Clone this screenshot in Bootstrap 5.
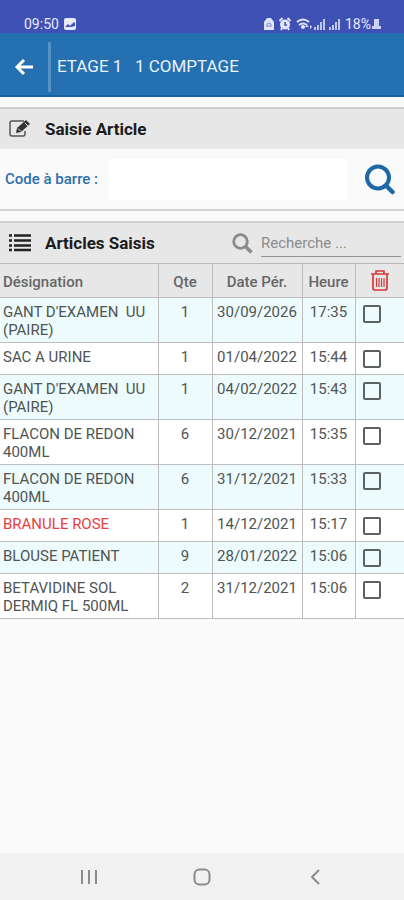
<!DOCTYPE html>
<html lang="fr">
<head>
<meta charset="utf-8">
<meta name="viewport" content="width=device-width, initial-scale=1">
<title>Comptage</title>
<link rel="stylesheet" href="https://cdn.jsdelivr.net/npm/bootstrap@5.3.0/dist/css/bootstrap.min.css">
<style>
  body { font-family: Roboto, "Liberation Sans", sans-serif; background: #fafafa; color: #505454; }
  svg { display: block; flex: none; }
  .status-bar { background: #3f51b5; color: #e6eafb; height: 33px; font-size: 14px; line-height: 18px; padding: 0 22px 0 24px; }
  .app-bar { background: #2570b0; border-bottom: 2px solid #1462a2; height: 64px; padding-top: 5px; color: #e9f3fb; }
  .back-btn { width: 48px; height: 50px; }
  .app-title { border-left: 3px solid #5592c5; height: 50px; padding-left: 6px; font-size: 17px; white-space: pre; }
  .panel-box { border-top: 2px solid #cfcfcf; margin-top: 10px; }
  .panel-head { background: #e7e7e7; height: 40px; padding-left: 8px; padding-right: 3px; }
  .panel-head h2 { font-size: 17px; font-weight: 700; color: #1c1c1c; padding-left: 13px; }
  .scan-form { height: 62px; padding: 0 8px 0 5px; border-bottom: 2px solid #d2d2d2; }
  .scan-form label { color: #2b6fac; font-size: 15px; font-weight: 500; width: 104px; }
  .scan-input { height: 41px; margin-right: 17px; }
  .search-input { width: 140px; height: 28px; line-height: 24px; border-bottom: 1px solid #929292; font-size: 15px; color: #777; }
  .search-input::placeholder { color: #8c8c8c; opacity: 1; }
  .items-table { table-layout: fixed; font-size: 15px; line-height: 18px; color: #505454; border-top: 1px solid #b9b9b9; }
  .items-table > :not(caption) > * > * { padding: 5px 3px 3px; border-right: 1px solid #bdbdbd; border-bottom: 1px solid #bdbdbd; color: inherit; background: transparent; box-shadow: none; }
  .items-table > :not(caption) > * > :last-child { border-right: 0; }
  .items-table thead { background: #e7e7e7; color: #666; }
  .items-table th { font-weight: 500; height: 34px; }
  .items-table tbody td { height: 32px; }
  .items-table tbody tr { background: #fff; }
  .items-table tbody tr:nth-child(odd) { background: #edfbfc; }
  .items-table tbody tr.item-alert { color: #e9403f; }
  .items-table tr.item-alert td + td { color: #505454; }
  .items-table td:first-child { white-space: pre-line; }
  .items-table > tbody > tr > td:last-child { padding: 7px 0 0 7px; }
  .items-table > thead > tr > th:last-child { padding: 0; }
  .pick-box { appearance: none; display: block; width: 18px; height: 18px; border: 2px solid #5c6262; border-radius: 2px; background: transparent; margin: 0; }
  .pick-box:checked { background: #2570b0; }
  .c-qty { width: 54px; } .c-date { width: 90px; } .c-time { width: 53px; } .c-del { width: 49px; }
  .nav-keys { background: #f1f1f1; height: 47px; padding: 0 33px; }
</style>
</head>
<body class="d-flex flex-column min-vh-100">
<div class="status-bar d-flex align-items-end justify-content-between">
  <div class="d-flex align-items-center gap-1">
    <span>09:50</span>
    <svg width="14" height="14" viewBox="0 0 14 14"><rect x="1" y="1" width="12" height="12" rx="2" fill="#e6eafb"/><path d="M2 10l3-3 2 2 4-4 1 1v3l-4 1z" fill="#3f51b5"/></svg>
  </div>
  <div class="d-flex align-items-center">
    <svg width="82" height="16" viewBox="0 0 82 16" fill="#dfe4f8" aria-hidden="true">
      <path d="M1 6l3-4h4l3 4v8H1z"/><path d="M4 11V8l2-1 2 1v3M4 10h4" fill="none" stroke="#8290d4"/>
      <circle cx="22" cy="8.500" r="5"/><path d="M16.500 5l3-3M27.500 5l-3-3M18 14l1-2M26 14l-1-2" stroke="#dfe4f8" stroke-width="2" fill="none"/><path d="M22 6v3h2" fill="none" stroke="#3f51b5" stroke-width="1.500"/>
      <path d="M34 6q6-5 12 0M36 9q4-3 8 0" fill="none" stroke="#dfe4f8" stroke-width="2"/><circle cx="40" cy="11" r="2"/><path d="M44 9l2 2h-4zM47 9v4l2-2z"/>
      <path d="M51 11h2v3h-2zM54 9h2v5h-2zM57 6h2v8h-2zM60 3h2v11h-2zM66 11h2v3h-2zM69 9h2v5h-2zM72 6h2v8h-2zM75 3h2v11h-2z" opacity=".8"/>
    </svg>
    <span>18%</span>
    <svg width="11" height="14" viewBox="0 0 11 14"><path d="M3 2h5v7h2v3H1V9h2z" fill="#cbd2f0"/></svg>
  </div>
</div>
<header class="app-bar d-flex align-items-center">
  <button type="button" class="back-btn btn p-0 border-0 d-flex align-items-center justify-content-center" aria-label="Retour">
    <svg width="20" height="18" viewBox="0 0 20 18" fill="none" stroke="#fff" stroke-width="3"><path d="M19 9H4M10 2L3 9l7 7"/></svg>
  </button>
  <h1 class="app-title d-flex align-items-center fw-normal mb-0">ETAGE 1   1 COMPTAGE</h1>
</header>
<main class="flex-grow-1">
  <section class="panel-box">
    <div class="panel-head d-flex align-items-center">
      <svg width="24" height="20" viewBox="0 0 24 20"><path d="M16 2H4Q2 2 2 4v11q0 2 2 2h11q2 0 2-2v-3" fill="none" stroke="#555" stroke-width="1.500"/><path d="M8 14l1-5 9-8 4 4-9 8z" fill="#333"/><path d="M17 4l3 3M10 9.500l3 3" stroke="#e7e7e7"/></svg>
      <h2 class="mb-0">Saisie Article</h2>
    </div>
    <form class="scan-form d-flex align-items-center">
      <label for="code">Code à barre :</label>
      <input id="code" type="text" class="scan-input form-control border-0 rounded-0 flex-grow-1 w-auto">
      <button type="button" class="btn p-0 border-0" aria-label="Chercher">
        <svg width="32" height="32" viewBox="0 0 32 32" fill="none" stroke="#1f68a6"><circle cx="14" cy="14.500" r="11" stroke-width="4"/><path d="M22 22.500l6.500 6.500" stroke-width="4.500" stroke-linecap="round"/></svg>
      </button>
    </form>
  </section>
  <section class="panel-box">
    <div class="panel-head d-flex align-items-center">
      <svg width="24" height="20" viewBox="0 0 24 20" stroke="#222" stroke-width="2.500"><path d="M1 2.500h3M1 7.500h3M1 12.500h3M1 17h3M6 2.500h17M6 7.500h17M6 12.500h17M6 17h17"/></svg>
      <h2 class="mb-0 me-auto">Articles Saisis</h2>
      <label for="find" class="me-2" aria-label="Recherche">
        <svg width="21" height="21" viewBox="0 0 21 21" fill="none" stroke="#8b8b8b"><circle cx="8.500" cy="8.500" r="6.800" stroke-width="2.800"/><path d="M13.500 13.500l6 6" stroke-width="3.500"/></svg>
      </label>
      <input id="find" type="text" class="search-input border-top-0 border-start-0 border-end-0 bg-transparent p-0" placeholder="Recherche ...">
    </div>
    <table class="items-table table mb-0">
      <colgroup><col><col class="c-qty"><col class="c-date"><col class="c-time"><col class="c-del"></colgroup>
      <thead>
        <tr class="text-center align-middle"><th class="text-start">Désignation</th><th>Qte</th><th>Date Pér.</th><th>Heure</th>
        <th><button type="button" class="btn p-0 border-0" aria-label="Supprimer"><svg width="20" height="23" viewBox="0 0 20 23" fill="none" stroke="#d63a3a" stroke-width="1.700"><path d="M1 5h18M6 5V2h8v3M3 5v14q0 2 2 2h10q2 0 2-2V5"/><path d="M6.500 9v9M9 9v9M11.500 9v9M14 9v9" stroke-width="1.200"/></svg></button></th></tr>
      </thead>
      <tbody class="text-center align-top">
        <tr><td class="text-start">GANT D'EXAMEN &nbsp;UU
(PAIRE)</td><td>1</td><td>30/09/2026</td><td>17:35</td><td><input type="checkbox" class="pick-box" aria-label="Ligne 1"></td></tr>
        <tr><td class="text-start">SAC A URINE</td><td>1</td><td>01/04/2022</td><td>15:44</td><td><input type="checkbox" class="pick-box" aria-label="Ligne 2"></td></tr>
        <tr><td class="text-start">GANT D'EXAMEN &nbsp;UU
(PAIRE)</td><td>1</td><td>04/02/2022</td><td>15:43</td><td><input type="checkbox" class="pick-box" aria-label="Ligne 3"></td></tr>
        <tr><td class="text-start">FLACON DE REDON
400ML</td><td>6</td><td>30/12/2021</td><td>15:35</td><td><input type="checkbox" class="pick-box" aria-label="Ligne 4"></td></tr>
        <tr><td class="text-start">FLACON DE REDON
400ML</td><td>6</td><td>31/12/2021</td><td>15:33</td><td><input type="checkbox" class="pick-box" aria-label="Ligne 5"></td></tr>
        <tr class="item-alert"><td class="text-start">BRANULE ROSE</td><td>1</td><td>14/12/2021</td><td>15:17</td><td><input type="checkbox" class="pick-box" aria-label="Ligne 6"></td></tr>
        <tr><td class="text-start">BLOUSE PATIENT</td><td>9</td><td>28/01/2022</td><td>15:06</td><td><input type="checkbox" class="pick-box" aria-label="Ligne 7"></td></tr>
        <tr><td class="text-start">BETAVIDINE SOL
DERMIQ FL 500ML</td><td>2</td><td>31/12/2021</td><td>15:06</td><td><input type="checkbox" class="pick-box" aria-label="Ligne 8"></td></tr>
      </tbody>
    </table>
  </section>
</main>
<nav class="nav-keys d-flex align-items-center justify-content-around">
  <button type="button" class="btn p-0 border-0" aria-label="Applications récentes"><svg width="18" height="18" viewBox="0 0 18 18" stroke="#8a8a8a" stroke-width="2"><path d="M2 2v14M9 2v14M16 2v14"/></svg></button>
  <button type="button" class="btn p-0 border-0" aria-label="Accueil"><svg width="18" height="18" viewBox="0 0 18 18" fill="none" stroke="#8a8a8a" stroke-width="2"><rect x="1.500" y="1.500" width="15" height="15" rx="5"/></svg></button>
  <button type="button" class="btn p-0 border-0" aria-label="Précédent"><svg width="18" height="18" viewBox="0 0 18 18" fill="none" stroke="#8a8a8a" stroke-width="2"><path d="M13 2L6 9l7 7"/></svg></button>
</nav>
<script src="https://cdn.jsdelivr.net/npm/bootstrap@5.3.0/dist/js/bootstrap.bundle.min.js"></script>
</body>
</html>
